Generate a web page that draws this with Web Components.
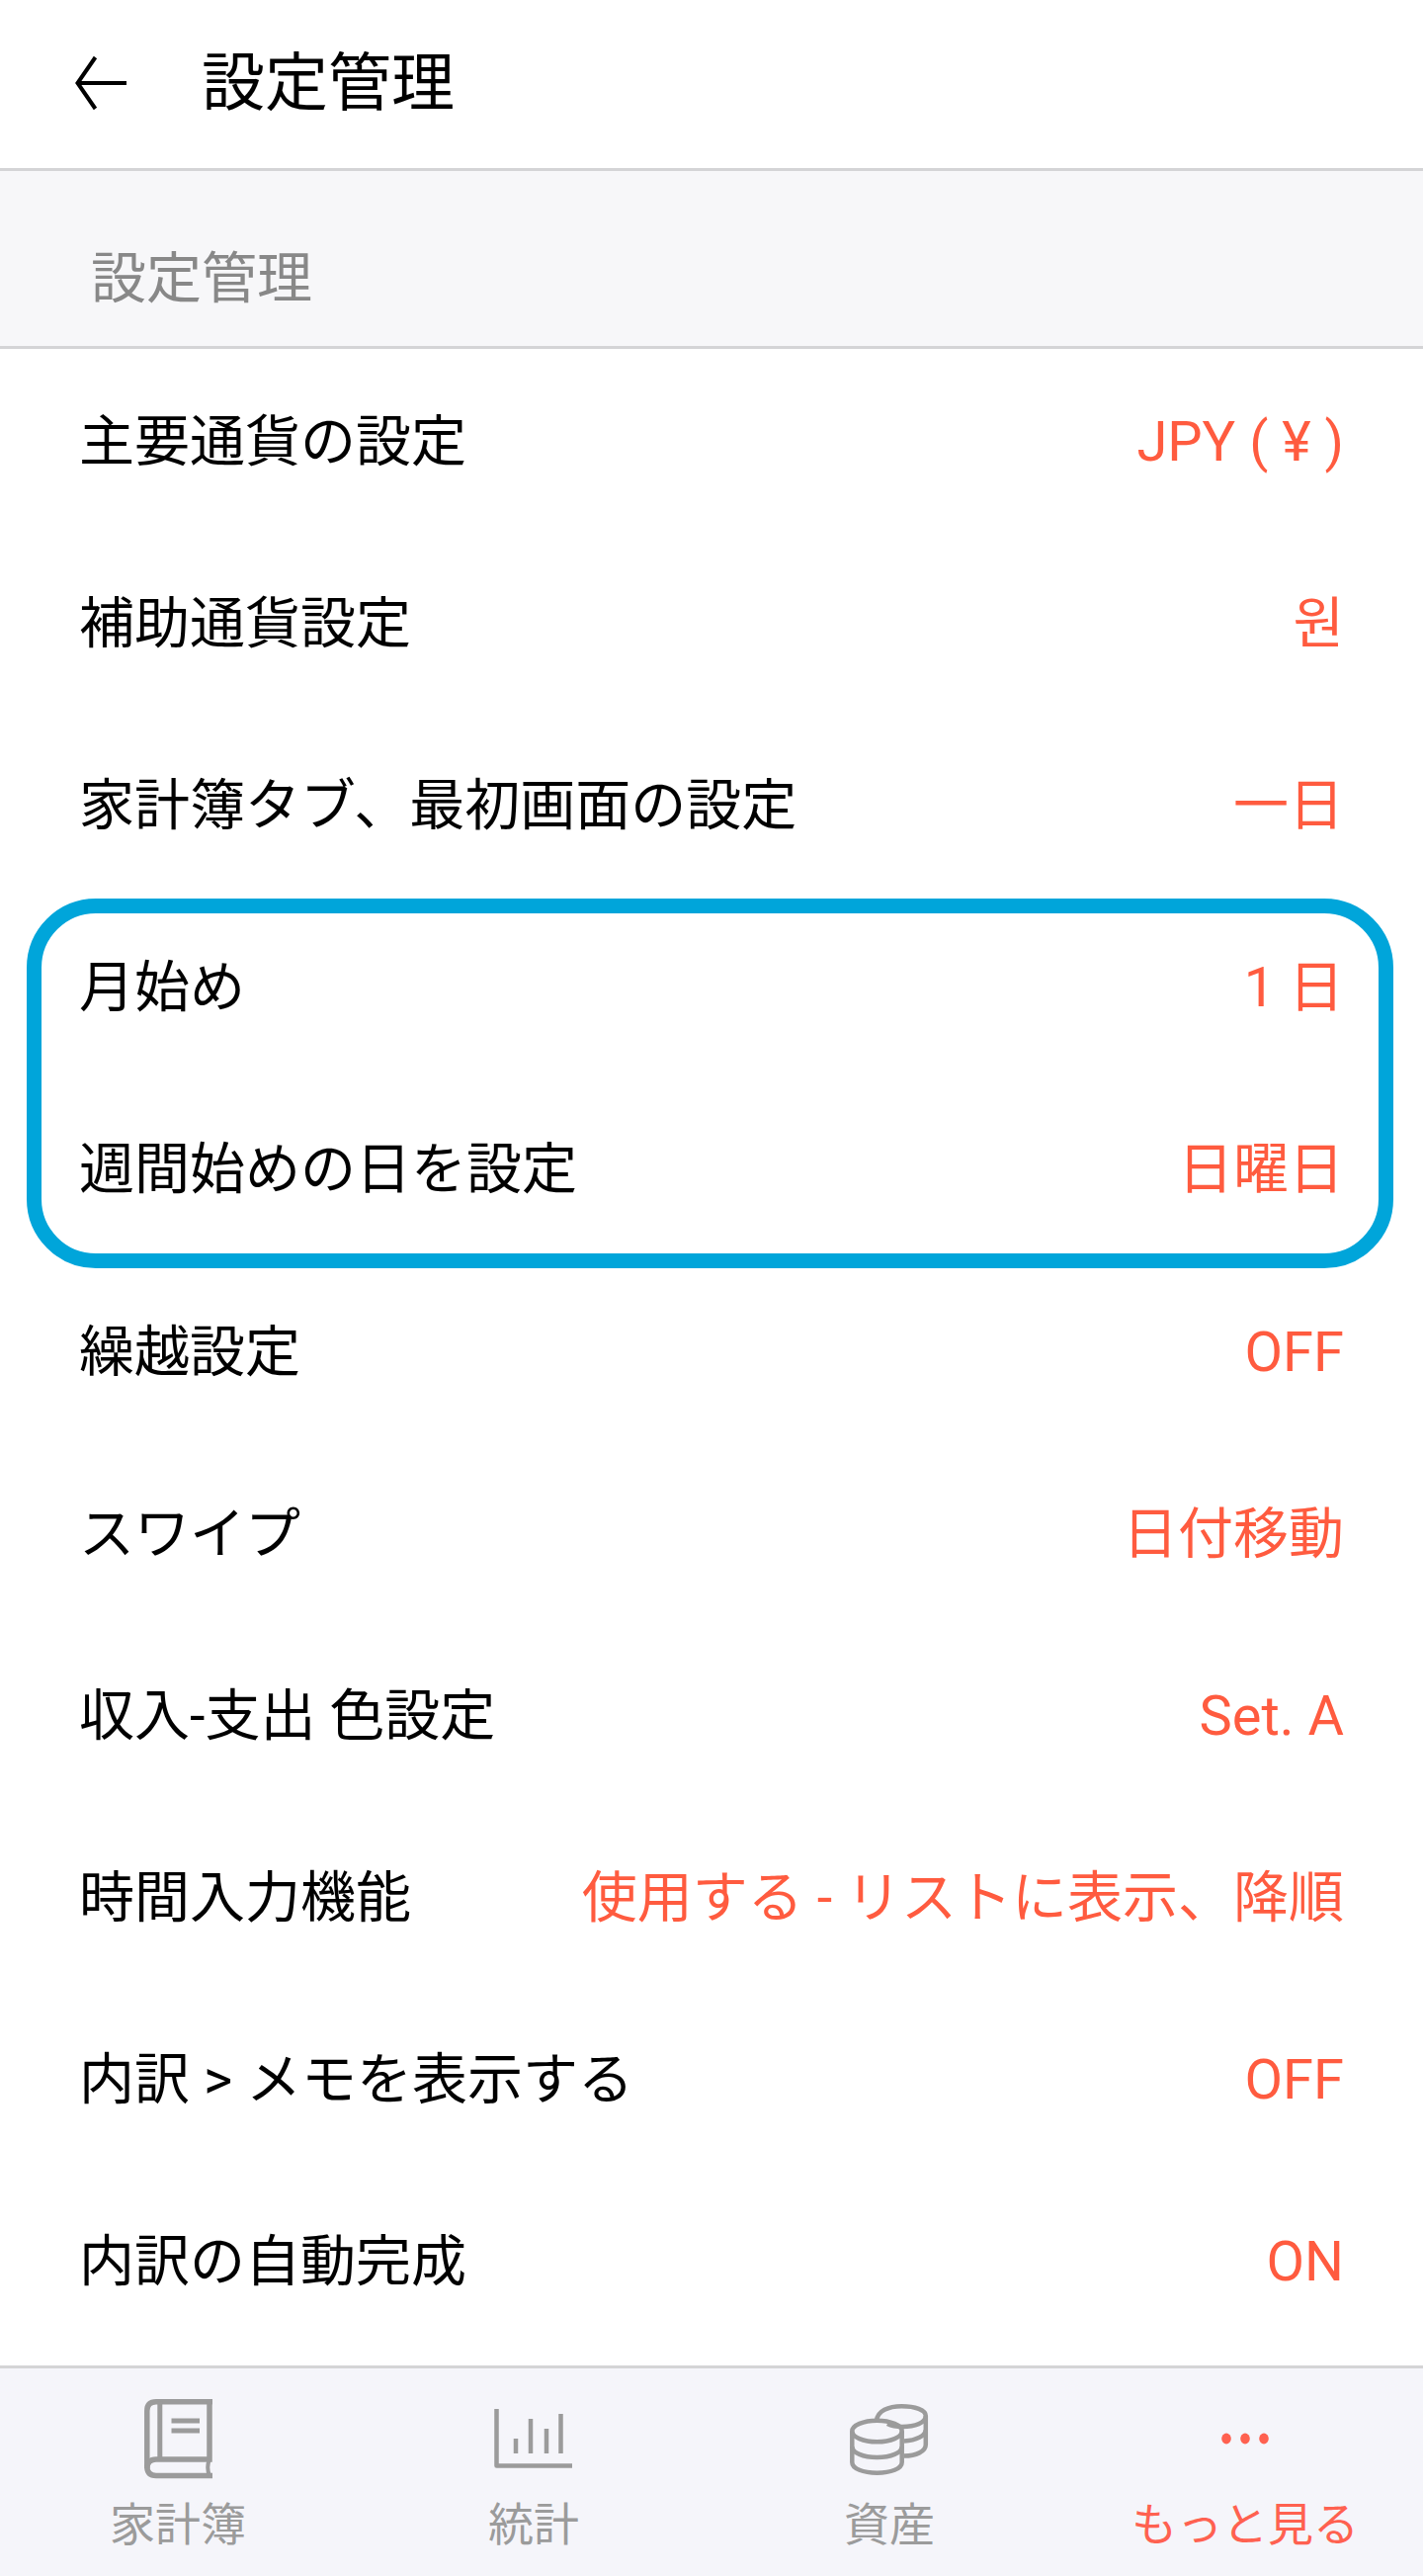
<!DOCTYPE html>
<html lang="ja">
<head>
<meta charset="utf-8">
<title>設定管理</title>
<style>
  html, body { margin: 0; padding: 0; background: #fff; }
  body { font-family: Roboto, "Noto Sans CJK JP", sans-serif; }
</style>
</head>
<body>
<settings-app>
  <top-bar title="設定管理"></top-bar>
  <section-title>設定管理</section-title>
  <settings-list>
    <setting-row label="主要通貨の設定" value="JPY ( ¥ )"></setting-row>
    <setting-row label="補助通貨設定" value="원"></setting-row>
    <setting-row label="家計簿タブ、最初画面の設定" value="一日"></setting-row>
    <highlight-group>
      <setting-row label="月始め" value="1 日"></setting-row>
      <setting-row label="週間始めの日を設定" value="日曜日"></setting-row>
    </highlight-group>
    <setting-row label="繰越設定" value="OFF"></setting-row>
    <setting-row label="スワイプ" value="日付移動"></setting-row>
    <setting-row label="収入-支出 色設定" value="Set. A"></setting-row>
    <setting-row label="時間入力機能" value="使用する - リストに表示、降順"></setting-row>
    <setting-row label="内訳 > メモを表示する" value="OFF"></setting-row>
    <setting-row label="内訳の自動完成" value="ON"></setting-row>
  </settings-list>
  <tab-bar>
    <tab-item label="家計簿">
      <svg viewBox="0 0 90 90" width="90" height="90" fill="none" stroke="#9b9b9b" stroke-width="5.5">
        <path d="M80 7.8H23Q13.8 7.8 13.8 17V73Q13.8 82.5 23 82.5H80"/>
        <path d="M13.8 75Q14 66 23 66H77V7.8"/>
        <path d="M26.8 7.8V66" stroke-width="5"/>
        <path d="M77 66Q73.5 74 77 82.5" stroke-width="4"/>
        <path d="M38.5 27H67M38.5 37H67" stroke-width="5"/>
      </svg>
    </tab-item>
    <tab-item label="統計">
      <svg viewBox="0 0 90 90" width="90" height="90" fill="none" stroke="#9b9b9b" stroke-width="4.5" stroke-linejoin="round">
        <path d="M7.5 15V72.5H84" />
        <path d="M27 45V60M42 25V60M58 35V60M72.5 20V60"/>
      </svg>
    </tab-item>
    <tab-item label="資産">
      <svg viewBox="0 0 90 90" width="90" height="90" fill="none" stroke="#9b9b9b" stroke-width="4.5">
        <path d="M32 27C33 17 44 12.2 57.5 12.2C71 12.2 81.8 16 81.8 22V51C81.8 58 72 62.5 60 62.5"/>
        <path d="M81.8 22C81.8 29 71 33 58 33C52 33 47 32 43 30"/>
        <path d="M81.8 36C81.8 42 72 47 60 47.5"/>
        <ellipse cx="32.5" cy="37.5" rx="25.2" ry="10.8"/>
        <path d="M7.3 37.5V69C7.3 75.5 18.5 79.7 32.5 79.7C46.5 79.7 57.7 75.5 57.7 69V37.5"/>
        <path d="M7.3 53C7.3 59.5 18.5 64 32.5 64C46.5 64 57.7 59.5 57.7 53"/>
      </svg>
    </tab-item>
    <tab-item label="もっと見る" active>
      <svg viewBox="0 0 90 90" width="90" height="90" fill="#ff6150">
        <ellipse cx="26" cy="45" rx="4.8" ry="5.4"/>
        <ellipse cx="45" cy="45" rx="4.8" ry="5.4"/>
        <ellipse cx="64" cy="45" rx="4.8" ry="5.4"/>
      </svg>
    </tab-item>
  </tab-bar>
</settings-app>

<script>
class SettingsApp extends HTMLElement {
    constructor() {
        super();
        this.attachShadow({ mode: 'open' });
        this.shadowRoot.innerHTML = `
        <style>
          :host {
            display: flex;
            flex-direction: column;
            width: 1440px;
            height: 2606px;
            overflow: hidden;
            background: #fff;
            font-family: Roboto, "Noto Sans CJK JP", sans-serif;
          }
        </style>
        <slot></slot>`;
    }
}

class TopBar extends HTMLElement {
    constructor() {
        super();
        this.attachShadow({ mode: 'open' });
    }

    connectedCallback() {
        this.shadowRoot.innerHTML = `
        <style>
          :host {
            display: flex;
            align-items: center;
            flex: none;
            box-sizing: border-box;
            height: 173px;
            padding: 0 0 3px 72px;
            border-bottom: 3px solid #d4d4d6;
            background: #fff;
          }
          svg { flex: none; }
          span {
            margin-left: 72px;
            padding-top: 3px;
            font-size: 64px;
            line-height: 1;
            color: #000;
          }
        </style>
        <svg width="60" height="60" viewBox="0 0 60 60" fill="none" stroke="#000" stroke-width="4">
          <path d="M24.5 4L6.5 30L24.5 56M6.5 30H56"/>
        </svg>
        <span>${this.getAttribute('title')}</span>`;
    }
}

class SectionTitle extends HTMLElement {
    constructor() {
        super();
        this.attachShadow({ mode: 'open' });
        this.shadowRoot.innerHTML = `
        <style>
          :host {
            display: flex;
            align-items: center;
            flex: none;
            box-sizing: border-box;
            height: 180px;
            padding: 40px 0 0 92px;
            border-bottom: 3px solid #d4d4d6;
            background: #f7f7f9;
            font-size: 56px;
            line-height: 1;
            color: #888;
          }
        </style>
        <slot></slot>`;
    }
}

class SettingsList extends HTMLElement {
    constructor() {
        super();
        this.attachShadow({ mode: 'open' });
        this.shadowRoot.innerHTML = `
        <style>
          :host {
            display: block;
            flex: 1;
            min-height: 0;
            background: #fff;
          }
        </style>
        <slot></slot>`;
    }
}

class SettingRow extends HTMLElement {
    constructor() {
        super();
        this.attachShadow({ mode: 'open' });
    }

    connectedCallback() {
        this.shadowRoot.innerHTML = `
        <style>
          :host {
            display: flex;
            align-items: center;
            justify-content: space-between;
            box-sizing: border-box;
            height: 184.1px;
            padding: 4px 80px 0 80px;
            font-size: 56px;
            line-height: 1;
          }
          .label { color: #000; white-space: pre; }
          .value { color: #ff5b3f; white-space: pre; }
        </style>
        <span class="label"></span>
        <span class="value"></span>`;
        this.shadowRoot.querySelector('.label').textContent = this.getAttribute('label');
        this.shadowRoot.querySelector('.value').textContent = this.getAttribute('value');
    }
}

class HighlightGroup extends HTMLElement {
    constructor() {
        super();
        this.attachShadow({ mode: 'open' });
        this.shadowRoot.innerHTML = `
        <style>
          :host {
            display: block;
            position: relative;
          }
          .frame {
            position: absolute;
            top: 3.7px;
            left: 27px;
            right: 30px;
            bottom: -9.5px;
            box-sizing: border-box;
            border: 15.5px solid #00a5da;
            border-radius: 70px;
            pointer-events: none;
          }
        </style>
        <slot></slot>
        <div class="frame"></div>`;
    }
}

class TabBar extends HTMLElement {
    constructor() {
        super();
        this.attachShadow({ mode: 'open' });
        this.shadowRoot.innerHTML = `
        <style>
          :host {
            display: grid;
            grid-template-columns: repeat(4, 1fr);
            flex: none;
            box-sizing: border-box;
            height: 213px;
            border-top: 3px solid #d4d4d6;
            background: #f5f5fa;
          }
        </style>
        <slot></slot>`;
    }
}

class TabItem extends HTMLElement {
    constructor() {
        super();
        this.attachShadow({ mode: 'open' });
    }

    connectedCallback() {
        const active = this.hasAttribute('active');
        this.shadowRoot.innerHTML = `
        <style>
          :host {
            display: flex;
            flex-direction: column;
            align-items: center;
            padding-top: 26px;
          }
          ::slotted(svg) { display: block; flex: none; }
          span {
            margin-top: 19px;
            font-size: 46px;
            line-height: 1;
            color: ${active ? '#ff6150' : '#9b9b9b'};
          }
        </style>
        <slot></slot>
        <span>${this.getAttribute('label')}</span>`;
    }
}

customElements.define('settings-app', SettingsApp);
customElements.define('top-bar', TopBar);
customElements.define('section-title', SectionTitle);
customElements.define('settings-list', SettingsList);
customElements.define('setting-row', SettingRow);
customElements.define('highlight-group', HighlightGroup);
customElements.define('tab-bar', TabBar);
customElements.define('tab-item', TabItem);
</script>
</body>
</html>
